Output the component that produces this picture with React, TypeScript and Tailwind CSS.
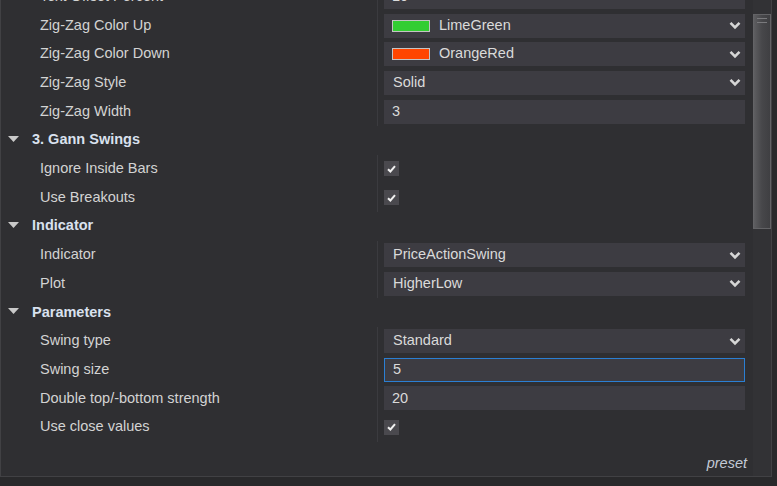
import type { ReactNode } from "react";

const font = { fontFamily: '"Liberation Sans", Arial, sans-serif' };

function Chevron() {
  return (
    <svg width="12" height="9" viewBox="0 0 12 9" className="shrink-0">
      <polyline points="1.5,1.8 6,6.3 10.5,1.8" fill="none" stroke="#d6d6d6" strokeWidth="2.6" />
    </svg>
  );
}

function Select({ text, swatch }: { text: string; swatch?: string }) {
  return (
    <div className="h-6 bg-[#3d3c42] flex items-center pl-[9px] pr-[4px]">
      {swatch && (
        <span className="w-[38px] h-3 border border-[#c4c4c4] mr-[9px] -ml-[1px]" style={{ background: swatch }} />
      )}
      <span className="flex-1 text-[#dadada]">{text}</span>
      <Chevron />
    </div>
  );
}

function Input({ text, focused }: { text: string; focused?: boolean }) {
  return (
    <div
      className={`h-6 bg-[#3d3c42] flex items-center pl-[8px] text-[#dadada] ${focused ? "border border-[#2b7fd3]" : ""}`}
    >
      {text}
    </div>
  );
}

function Check() {
  return (
    <div className="w-[15px] h-[15px] bg-[#4a494e] grid place-items-center">
      <svg width="9" height="8" viewBox="0 0 9 8">
        <polyline points="1,4.2 3.4,6.5 8,1.2" fill="none" stroke="#f0f0f0" strokeWidth="2" />
      </svg>
    </div>
  );
}

const groups: { header?: string; rows: [string, ReactNode][] }[] = [
  {
    rows: [
      ["Text Offset Percent", <Input text="10" />],
      ["Zig-Zag Color Up", <Select text="LimeGreen" swatch="#32cd32" />],
      ["Zig-Zag Color Down", <Select text="OrangeRed" swatch="#ff4500" />],
      ["Zig-Zag Style", <Select text="Solid" />],
      ["Zig-Zag Width", <Input text="3" />],
    ],
  },
  {
    header: "3. Gann Swings",
    rows: [
      ["Ignore Inside Bars", <Check />],
      ["Use Breakouts", <Check />],
    ],
  },
  {
    header: "Indicator",
    rows: [
      ["Indicator", <Select text="PriceActionSwing" />],
      ["Plot", <Select text="HigherLow" />],
    ],
  },
  {
    header: "Parameters",
    rows: [
      ["Swing type", <Select text="Standard" />],
      ["Swing size", <Input text="5" focused />],
      ["Double top/-bottom strength", <Input text="20" />],
      ["Use close values", <Check />],
    ],
  },
];

function Header({ label }: { label: string }) {
  return (
    <div className="h-[28.7px] flex items-center">
      <svg width="11" height="7" viewBox="0 0 11 7" className="ml-[7px] mr-[13px] -mt-[1px]">
        <polygon points="0,0 11,0 5.5,6" fill="#c9c9c9" />
      </svg>
      <span className="font-bold text-[#d9e1ee]">{label}</span>
    </div>
  );
}

export default function App() {
  return (
    <div className="w-[777px] h-[486px] bg-[#29292b] overflow-hidden text-[14.5px]" style={font}>
      <div className="w-[772px] h-[477px] bg-[#2f2f32] border-l border-r border-b border-[#414144] flex">
        <div className="flex-1 flex flex-col overflow-hidden">
          <div className="-mt-[17.5px]">
            {groups.map((g, gi) => (
              <div key={gi}>
                {g.header && <Header label={g.header} />}
                <div className="grid grid-cols-[376px_1fr]">
                  <div>
                    {g.rows.map(([label]) => (
                      <div key={label} className="h-[28.7px] flex items-center pl-[39px] text-[#d3d3d3]">
                        {label}
                      </div>
                    ))}
                  </div>
                  <div className="border-l border-[#3b3b3f]">
                    {g.rows.map(([label, value]) => (
                      <div key={label} className="h-[28.7px] flex flex-col justify-center pl-[6px] pr-[8px]">
                        {value}
                      </div>
                    ))}
                  </div>
                </div>
              </div>
            ))}
          </div>
          <div className="flex-1 flex justify-end pr-[6px] pt-[11px]">
            <span className="italic text-[#c3cad6]">preset</span>
          </div>
        </div>
        <div className="w-[18px] bg-[#323235] pt-[14px]">
          <div className="h-[215px] border border-[#636366] bg-gradient-to-r from-[#5e5e61] via-[#47474a] to-[#3f3f42] flex flex-col items-center pt-[3px] gap-[3px]">
            <div className="w-[10px] h-px bg-[#7a7a7d]" />
            <div className="w-[10px] h-px bg-[#7a7a7d]" />
          </div>
        </div>
      </div>
    </div>
  );
}
